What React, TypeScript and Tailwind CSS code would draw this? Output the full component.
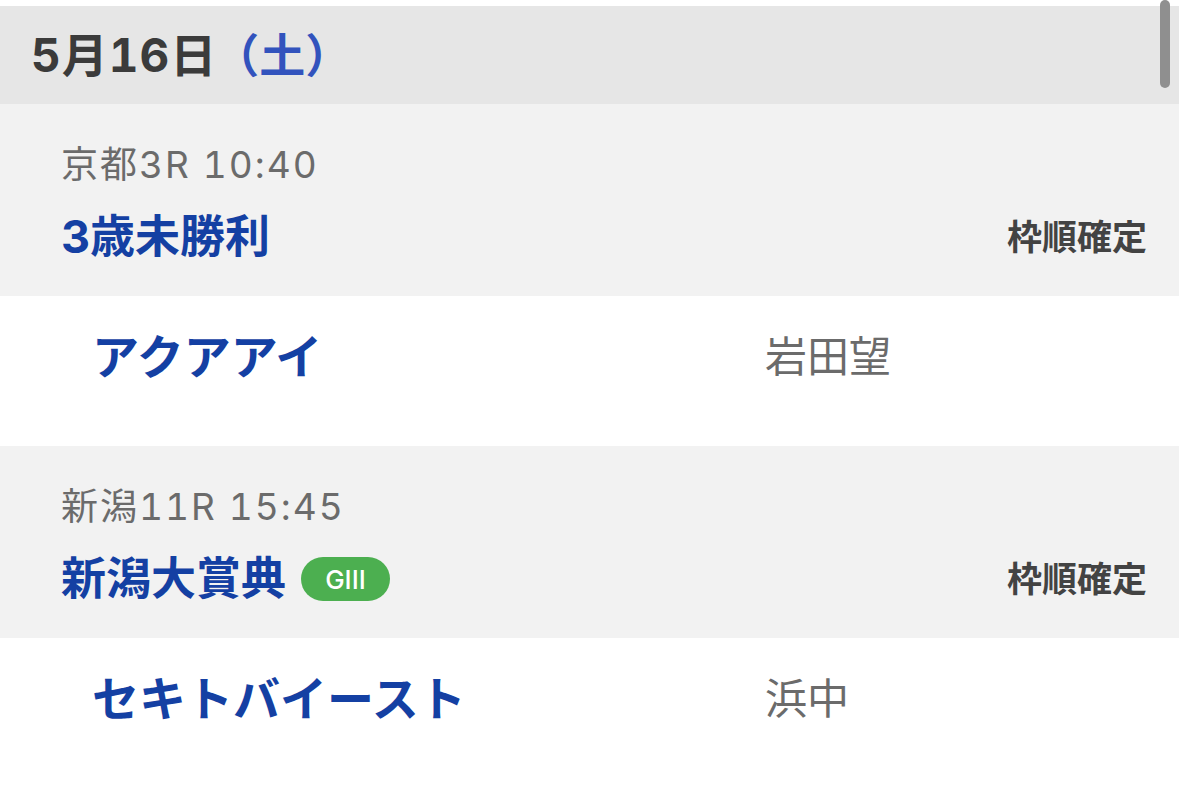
import React from 'react'

type Entry = {
  place: string
  time: string
  title: string
  grade?: string
  horse: string
  jockey: string
}

const entries: Entry[] = [
  { place: '京都3R', time: '10:40', title: '3歳未勝利', horse: 'アクアアイ', jockey: '岩田望' },
  { place: '新潟11R', time: '15:45', title: '新潟大賞典', grade: 'GIII', horse: 'セキトバイースト', jockey: '浜中' },
]

const font = { fontFamily: 'Inter, "Noto Sans CJK JP", sans-serif' }

export default function App() {
  return (
    <div className="relative w-[1179px] h-[787px] overflow-hidden bg-white" style={font}>
      {/* scrollbar thumb */}
      <div className="absolute right-[9px] top-0 w-[10px] h-[88px] rounded-full bg-[#8f8f8f]" />

      <div className="h-[6px] bg-white" />
      <div className="h-[98px] bg-[#e6e6e6] flex items-center pl-[31px]">
        <span className="text-[46px] font-bold text-[#3b3b3b] tabular-nums tracking-[1px]">5月16日</span>
        <span className="ml-[-4px] text-[46px] font-bold text-[#3253bd]">（土）</span>
      </div>

      {entries.map((e) => (
        <div key={e.title}>
          <div className="h-[192px] bg-[#f2f2f2] pt-[41px] pl-[61px] pr-[32px]">
            <div className="h-[40px] leading-[40px] text-[37px] text-[#6b6b6b] tabular-nums tracking-[2px]">
              {e.place} {e.time}
            </div>
            <div className="mt-[28px] h-[48px] flex items-center justify-between">
              <div className="flex items-center gap-[15px]">
                <span className="text-[45px] font-bold text-[#1440a3] leading-[48px]">{e.title}</span>
                {e.grade && (
                  <span className="h-[44px] w-[89px] rounded-full bg-[#4caf50] text-white text-[26px] font-medium flex items-center justify-center">
                    {e.grade}
                  </span>
                )}
              </div>
              <span className="text-[35px] font-bold text-[#434343]">枠順確定</span>
            </div>
          </div>
          <div className="h-[150px] bg-white pt-[36px] flex">
            <div className="w-[765px] pl-[92px] text-[47px] font-bold text-[#1440a3] leading-[50px]">{e.horse}</div>
            <div className="text-[42px] text-[#6b6b6b] leading-[50px]">{e.jockey}</div>
          </div>
        </div>
      ))}
    </div>
  )
}
